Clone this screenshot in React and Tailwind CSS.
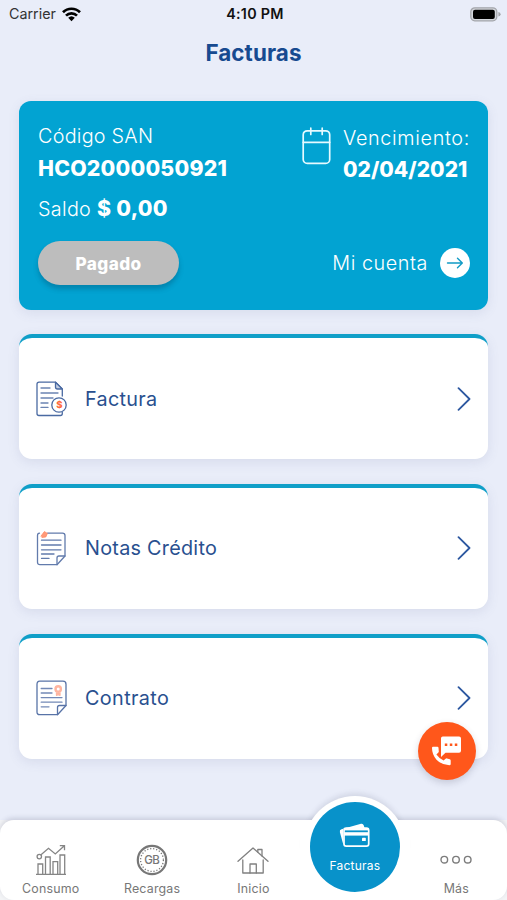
import React from "react";

const cards = [
  { label: "Factura", Icon: InvoiceIcon, tracking: "tracking-[0.3px]" },
  { label: "Notas Crédito", Icon: NotesIcon, tracking: "tracking-[0.27px]" },
  { label: "Contrato", Icon: ContractIcon, tracking: "tracking-[0.38px]" },
];

function WifiIcon() {
  return (
    <svg className="ml-[6px] h-[15px] w-[19px]" viewBox="0 0 19 15" fill="none" stroke="#000" strokeWidth="2.7">
      <path d="M1 5.3 A12 12 0 0 1 18 5.3" />
      <path d="M4 8.6 A7.8 7.8 0 0 1 15 8.6" />
      <path d="M9.5 14.2 L6.2 10.8 A4.8 4.8 0 0 1 12.8 10.8 Z" fill="#000" stroke="none" />
    </svg>
  );
}

function BatteryIcon() {
  return (
    <svg className="h-[15px] w-[31px]" viewBox="0 0 31 15">
      <rect x="0.8" y="0.8" width="26" height="13" rx="4" fill="#d4d7dd" stroke="#a3a5aa" strokeWidth="1.3" />
      <rect x="3" y="2.7" width="21.8" height="9.2" rx="2" fill="#000" />
      <path d="M28.4 5 Q30.6 5.6 30.6 7.3 Q30.6 9 28.4 9.6 Z" fill="#a3a5aa" />
    </svg>
  );
}

function CalendarIcon() {
  return (
    <svg className="h-[38px] w-[29px]" viewBox="0 0 29 38" fill="none" stroke="#e6faff" strokeWidth="1.7" strokeLinecap="round">
      <rect x="1.2" y="3.8" width="26.5" height="32.6" rx="4" />
      <path d="M1.2 15.3H27.7M8.8 1.2V7.4M20.2 1.2V7.4" />
    </svg>
  );
}

function InvoiceIcon() {
  return (
    <svg className="h-[36px] w-[32px]" viewBox="0 0 32 36" fill="none" stroke="#4a6aa2" strokeWidth="1.3" strokeLinecap="round" strokeLinejoin="round">
      <path d="M26.3 15V8L19.5 1.2H3Q1 1.2 1 3.2V32.5Q1 34.5 3 34.5H24.5Q26.3 34.5 26.3 32.5V31.5" />
      <path d="M19.5 1.2V6Q19.5 8 21.5 8H26.3Z" fill="#c3cee2" />
      <path d="M5 7H14M5 12H22M5 17H17M5 22H12M5 26.4H12" stroke="#6b84b2" />
      <circle cx="23" cy="24" r="7.2" fill="#fff" />
      <text x="23.3" y="27.4" textAnchor="middle" fill="#ff6a3d" stroke="none" fontSize="9.5" fontWeight="800" fontFamily="Inter, sans-serif">$</text>
    </svg>
  );
}

function NotesIcon() {
  return (
    <svg className="h-[36px] w-[32px]" viewBox="0 0 32 36" fill="none" stroke="#627bac" strokeWidth="1.3" strokeLinecap="round" strokeLinejoin="round">
      <path d="M11.5 3.2H26.5Q29 3.2 29 5.5V26L21 34.7H4Q1.5 34.7 1.5 32.2V5.5Q1.5 3.2 3.5 3.2" />
      <path d="M21 34.7V28Q21 26 23 26H29" />
      <path d="M5.5 10.2H25M5.5 15H25M5.5 19.8H25M5.5 24H18M5.5 28.4H13" />
      <path d="M5.2 5.8L8.4 1.6L11.4 3.4L9.8 7L6.2 7.4Z" fill="#ff9a79" stroke="#ff8b65" strokeWidth="0.8" />
    </svg>
  );
}

function ContractIcon() {
  return (
    <svg className="h-[36px] w-[32px]" viewBox="0 0 32 36" fill="none" stroke="#5873a7" strokeWidth="1.3" strokeLinecap="round" strokeLinejoin="round">
      <path d="M3.7 1.2H27Q30 1.2 30 4.2V25.5L21.5 34.7H3.7Q1 34.7 1 32V4.2Q1 1.2 3.7 1.2Z" />
      <path d="M21.5 34.7V27.5Q21.5 25.5 23.5 25.5H30" />
      <path d="M5.2 8.5H16M5.2 13H16M5.2 17.6H26M5.2 22.2H26M5.2 26.8H13" stroke="#7389b6" />
      <circle cx="22.2" cy="9" r="2.7" stroke="#ffb5a0" strokeWidth="2.4" />
      <path d="M20.5 13V15.3L22.2 14.6L24 15.3V13" stroke="#ffb5a0" fill="#ffb5a0" />
    </svg>
  );
}

function Chevron() {
  return (
    <svg className="h-[24px] w-[14px]" viewBox="0 0 14 24" fill="none" stroke="#2d58a0" strokeWidth="1.8" strokeLinecap="round" strokeLinejoin="round">
      <path d="M1.5 1.2L12.5 12L1.5 22.8" />
    </svg>
  );
}

function UsageIcon() {
  return (
    <svg className="h-[32px] w-[32px]" viewBox="0 0 32 32" fill="none" stroke="#858585" strokeWidth="1.3">
      <path d="M1 30.3H31M3 30V20H7.7V30M10.5 30V13H15.2V30M18 30V17.7H22.7V30M25 30V11H29.7V30" />
      <circle cx="4.3" cy="12.6" r="2.2" />
      <path d="M6 10.8L13.5 4.3L20.3 10L28.8 2.3M24.8 1.6H29.5V6.3" />
    </svg>
  );
}

function TopUpIcon() {
  return (
    <svg className="h-[32px] w-[32px]" viewBox="0 0 32 32" fill="none" stroke="#777">
      <circle cx="16" cy="16" r="14.2" strokeWidth="2.2" />
      <circle cx="16" cy="16" r="11.4" strokeWidth="1.3" strokeDasharray="1.2 1.83" />
      <text x="15.8" y="20.3" textAnchor="middle" fill="#777" stroke="none" fontSize="11.5" fontWeight="500" fontFamily="Inter, sans-serif" letterSpacing="-0.5">GB</text>
    </svg>
  );
}

function HomeIcon() {
  return (
    <svg className="h-[32px] w-[32px]" viewBox="0 0 32 32" fill="none" stroke="#808080" strokeWidth="1.3" strokeLinejoin="round" strokeLinecap="round">
      <path d="M1 17.3L16 4L31 17.3" />
      <path d="M5.8 16V29H13V20H19.3V29H26.2V16" />
      <path d="M13 29H19.3M20.8 8V5.5H25V12" />
    </svg>
  );
}

function MoreIcon() {
  return (
    <svg className="h-[32px] w-[32px]" viewBox="0 0 32 32" fill="none" stroke="#7c7c7c" strokeWidth="1.4">
      <circle cx="4.3" cy="15.7" r="3.3" />
      <circle cx="16" cy="15.7" r="3.3" />
      <circle cx="27.7" cy="15.7" r="3.3" />
    </svg>
  );
}

function CardsIcon() {
  return (
    <svg className="h-[25px] w-[31px]" viewBox="0 0 31 25" fill="none">
      <path d="M4.6 21.2Q4 20.6 3.7 19.6L0.9 9.2Q0.3 7 2.5 6.3L22 0.8Q24 0.3 24.7 2.2L25.6 5H6Q4 5 4 7Z" fill="#fff" />
      <rect x="5" y="5.2" width="24.7" height="18" rx="2.2" fill="#0892ca" stroke="#fff" strokeWidth="1.7" />
      <path d="M5 9.2H29.7V12.6H5Z" fill="#fff" />
      <path d="M5 5.2H29.7V7.4H5Z" fill="#fff" />
      <rect x="23" y="14.7" width="3.8" height="3.4" rx="0.7" fill="#fff" />
    </svg>
  );
}

function SupportIcon() {
  return (
    <svg className="h-[32px] w-[32px]" viewBox="0 0 32 32">
      <path d="M11.8 1.5H28Q30 1.5 30 3.5V15.8Q30 17.8 28 17.8H14.5L10 22V3.3Q10 1.5 11.8 1.5Z" fill="#fff" />
      <path d="M13.8 8.5H16.3V11H13.8ZM18.8 8.5H21.3V11H18.8ZM23.8 8.5H26.3V11H23.8Z" fill="#ff571b" />
      <path d="M2 11.8H6.4Q7.4 11.8 7.5 12.8L7.8 16.4Q7.9 17 7.4 17.5L5.4 19.5Q8 23.3 12.6 25.6L14.6 23.7Q15.2 23.2 16 23.4L18.8 24.2Q19.7 24.5 19.7 25.4V29Q19.7 30.2 18.4 30.2Q10.5 30 5.5 24.7Q1 19.5 1 13Q1 11.8 2 11.8Z" fill="#fff" />
    </svg>
  );
}

const tabs = [
  { label: "Consumo", Icon: UsageIcon },
  { label: "Recargas", Icon: TopUpIcon },
  { label: "Inicio", Icon: HomeIcon },
  { label: "Facturas", active: true },
  { label: "Más", Icon: MoreIcon },
];

function Tab({ label, Icon, active }) {
  if (active) {
    return (
      <div className="relative flex justify-center">
        <div className="absolute top-[-24px] h-[102px] w-[102px] rounded-full bg-white shadow-[0_-3px_5px_rgba(70,75,110,0.13)]" />
        <div className="absolute top-0 h-[80px] w-[110px] bg-white" />
        <div className="absolute top-[-18px] flex h-[90px] w-[90px] flex-col items-center rounded-full bg-[#0892ca] pt-[21px] text-white">
          <CardsIcon />
          <span className="mt-[11px] text-[12px] leading-[14px] tracking-[0.25px]">{label}</span>
        </div>
      </div>
    );
  }
  return (
    <div className="flex flex-col items-center pt-[24px] text-[#777]">
      <Icon />
      <span className="mt-[5.5px] text-[12.4px] leading-[14px] tracking-[0.2px]">{label}</span>
    </div>
  );
}

export default function App() {
  return (
    <div className="relative flex h-[900px] w-[507px] flex-col overflow-hidden bg-[#e9edf9] font-['Inter',sans-serif]">
      <header className="grid h-[28px] grid-cols-3 items-center pr-[6px] pl-[9px] text-[14.3px] text-[#111]">
        <div className="flex items-center text-[#333]">
          <span>Carrier</span>
          <WifiIcon />
        </div>
        <span className="text-center font-semibold tracking-[0.3px] whitespace-nowrap">4:10 PM</span>
        <div className="flex justify-end">
          <BatteryIcon />
        </div>
      </header>
      <h1 className="h-[73px] pt-[11px] text-center text-[22.4px] leading-[28px] font-bold tracking-[0.1px] text-[#174a90]">Facturas</h1>

      <main className="flex flex-col gap-[24.5px] px-[19px]">
        <section className="flex h-[208.5px] justify-between rounded-[12px] bg-[#02a3d2] pr-[18px] pl-[19px] pt-[23px] text-white shadow-[0_3px_12px_rgba(90,100,150,0.12)]">
          <div className="flex flex-col items-start">
            <span className="text-[19.8px] leading-[24px] font-[350] tracking-[0.25px]">Código SAN</span>
            <span className="mt-[8px] text-[21.3px] leading-[24px] font-extrabold tracking-[0.2px]">HCO2000050921</span>
            <span className="mt-[16px] text-[19.8px] leading-[24px] font-[350] tracking-[0.3px] whitespace-nowrap">
              Saldo <b className="text-[21.3px] font-extrabold">$ 0,00</b>
            </span>
            <button className="mt-[20px] h-[44px] w-[141px] rounded-full bg-[#bdbdbd] pt-[1px] text-[17.2px] font-extrabold tracking-[0.4px] shadow-[0_4px_5px_rgba(0,60,90,0.3)]">Pagado</button>
          </div>
          <div className="flex flex-col items-end">
            <div className="flex">
              <div className="pt-[3px]">
                <CalendarIcon />
              </div>
              <div className="ml-[12px] flex w-[127px] flex-col pt-[2px]">
                <span className="text-[19.8px] leading-[24px] font-[350] tracking-[0.65px] whitespace-nowrap">Vencimiento:</span>
                <span className="mt-[8px] text-[21px] leading-[24px] font-extrabold whitespace-nowrap">02/04/2021</span>
              </div>
            </div>
            <div className="mt-[66px] flex items-center">
              <span className="text-[19.8px] leading-[24px] font-[350] tracking-[0.55px]">Mi cuenta</span>
              <div className="ml-[12px] flex h-[30px] w-[30px] items-center justify-center rounded-full bg-white">
                <svg className="h-[12px] w-[18px]" viewBox="0 0 18 12" fill="none" stroke="#119bc5" strokeWidth="1.4" strokeLinecap="round" strokeLinejoin="round">
                  <path d="M1.5 6H16M11.5 1.3L16.3 6L11.5 10.7" />
                </svg>
              </div>
            </div>
          </div>
        </section>

        {cards.map(({ label, Icon, tracking }) => (
          <section key={label} className="flex h-[125.3px] items-center rounded-[13px] border-t-[4px] border-[#109fc8] bg-white px-[17px] shadow-[0_3px_12px_rgba(90,100,150,0.13)]">
            <Icon />
            <span className={`ml-[17px] flex-1 text-[19.8px] leading-[24px] text-[#29508f] ${tracking}`}>{label}</span>
            <Chevron />
          </section>
        ))}
      </main>

      <button className="absolute top-[722px] left-[418px] flex h-[58px] w-[58px] items-center justify-center rounded-full bg-[#ff571b] shadow-[0_3px_7px_rgba(60,60,90,0.2)]">
        <SupportIcon />
      </button>

      <div className="mt-auto bg-[#f3f4f6]">
        <nav className="grid h-[80px] grid-cols-5 rounded-[14px] bg-white shadow-[0_-2px_5px_rgba(70,75,110,0.2)]">
          {tabs.map((tab) => (
            <Tab key={tab.label} {...tab} />
          ))}
        </nav>
      </div>
    </div>
  );
}
